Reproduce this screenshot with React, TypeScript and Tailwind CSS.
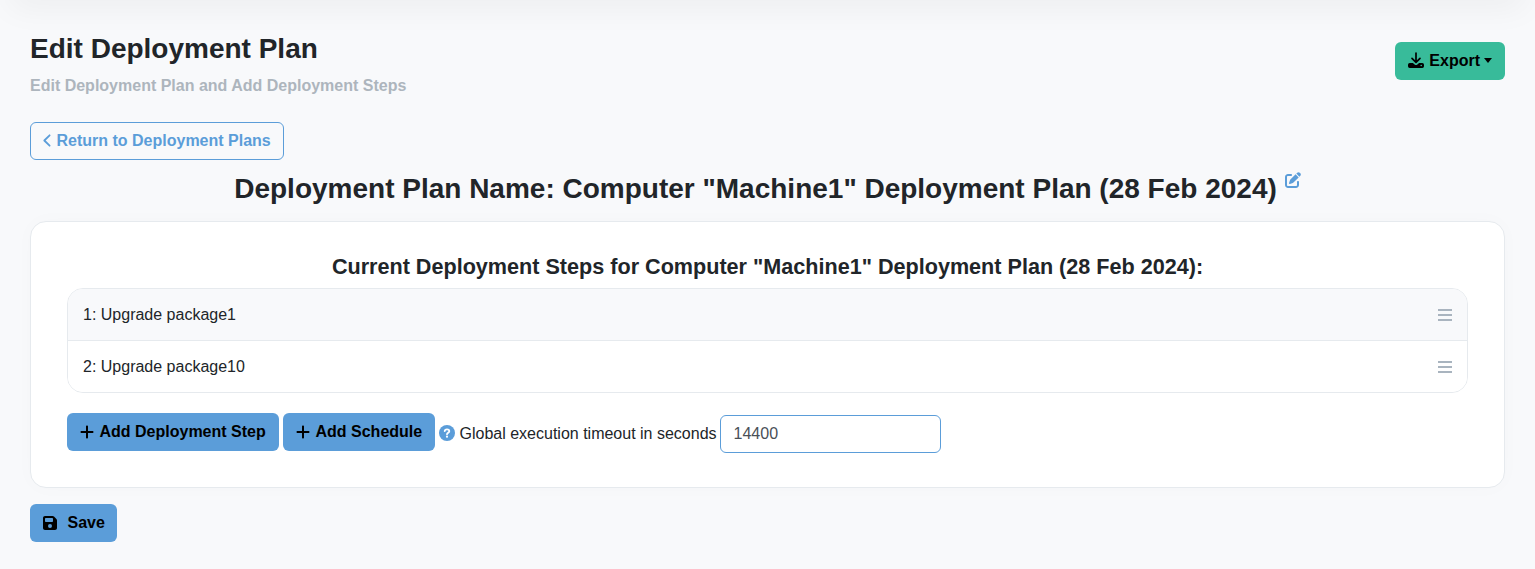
import type { ReactNode } from "react";
import { FaPlus, FaPenToSquare, FaFloppyDisk } from "react-icons/fa6";

function StepRow({ children, shaded }: { children: ReactNode; shaded?: boolean }) {
  return (
    <li className={`flex h-[52px] items-center justify-between border-b border-[#e6eaee] pr-[15px] pl-[15px] text-[#212529] last:h-[51px] last:border-b-0 ${shaded ? "bg-[#f8f9fb]" : "bg-white"}`}>
      <span className="text-base">{children}</span>
      <svg width="14" height="12" viewBox="0 0 14 12" fill="#a9b4bf" shapeRendering="crispEdges">
        <path d="M0 0h14v2H0zM0 5h14v2H0zM0 10h14v2H0z" />
      </svg>
    </li>
  );
}

function DownloadIcon() {
  return (
    <svg width="16" height="16" viewBox="0 0 16 16" className="mr-[5px] mb-[2px]">
      <path d="M8 1v9M4 6.3 8 10.3l4-4" fill="none" stroke="currentColor" strokeWidth="1.7" strokeLinecap="round" strokeLinejoin="round" />
      <path fillRule="evenodd" fill="currentColor" d="M1.7 11h3.2l1.7 1.5q1.4 1 2.8 0L11.1 11h3.2Q16 11 16 12.7v1.6q0 1.7-1.7 1.7H1.7Q0 16 0 14.3v-1.6Q0 11 1.7 11ZM13.2 12.7a.8.8 0 1 0 0 1.6.8.8 0 0 0 0-1.6Z" />
    </svg>
  );
}

function HelpIcon() {
  return (
    <svg width="16" height="16" viewBox="0 0 16 16" className="mr-[4.5px] mb-[2px]">
      <circle cx="8" cy="8" r="8" fill="#5b9dd9" />
      <path d="M5.7 6.1C5.8 4.9 6.6 4.4 8 4.4s2.3.7 2.3 1.8C10.3 7.6 8 7.7 8 9.2" fill="none" stroke="white" strokeWidth="1.8" strokeLinecap="round" />
      <circle cx="8" cy="11.7" r="1.1" fill="white" />
    </svg>
  );
}

export default function App() {
  return (
    <div className="h-[569px] overflow-hidden bg-[#f8f9fb] font-['Liberation_Sans',Arial,sans-serif] text-base text-[#212529]">
      <div className="mx-[10px] -mt-8 h-8 shadow-[0_8px_32px_rgba(0,0,0,0.05)]" />
      <div className="px-[30px] pt-8">
        <header className="flex justify-between">
          <div>
            <h1 className="text-[28px] leading-[34px] font-bold">Edit Deployment Plan</h1>
            <p className="mt-[8px] text-base leading-6 font-bold text-[#adb5bd]">Edit Deployment Plan and Add Deployment Steps</p>
          </div>
          <button className="mt-[10px] flex h-[38px] items-center rounded-[6px] bg-[#38bb9a] px-[13px] font-bold text-black">
            <DownloadIcon />
            Export
            <span className="mb-px ml-1 border-x-4 border-t-[5px] border-x-transparent border-t-black" />
          </button>
        </header>
        <button className="mt-6 flex h-[38px] w-[254px] items-center rounded-[6px] border border-[#5b9dd9] pl-3 font-bold whitespace-nowrap text-[#5b9dd9]">
          <svg width="10" height="16" viewBox="0 0 10 16" className="mr-[3.5px]" fill="none" stroke="currentColor" strokeWidth="1.8" strokeLinecap="round" strokeLinejoin="round">
            <path d="M6.6 2.3 1.3 7.5l5.3 5.2" />
          </svg>
          Return to Deployment Plans
        </button>
        <h2 className="mt-3 flex justify-center text-[28px] leading-[34px] font-bold">
          Deployment Plan Name: Computer "Machine1" Deployment Plan (28 Feb 2024)
          <FaPenToSquare className="ml-2 size-4 text-[#5b9dd9]" />
        </h2>
        <main className="mt-[15px] h-[267px] rounded-[16px] border border-[#e6eaee] bg-white px-9 pt-[31px] shadow-[0_0_20px_rgba(0,0,0,0.02)]">
          <h3 className="text-center text-[21.6px] leading-[27px] font-bold">Current Deployment Steps for Computer "Machine1" Deployment Plan (28 Feb 2024):</h3>
          <ul className="mt-2 overflow-hidden rounded-[16px] border border-[#e6eaee]">
            <StepRow shaded>1: Upgrade package1</StepRow>
            <StepRow>2: Upgrade package10</StepRow>
          </ul>
          <div className="mt-5 flex items-start">
            <button className="flex h-[38px] w-[212px] items-center rounded-[6px] bg-[#5b9dd9] pl-3 font-bold whitespace-nowrap text-black"><FaPlus className="mr-[4.5px] mb-px" />Add Deployment Step</button>
            <button className="ml-1 flex h-[38px] w-[152px] items-center rounded-[6px] bg-[#5b9dd9] pl-3 font-bold whitespace-nowrap text-black"><FaPlus className="mr-[4.5px] mb-px" />Add Schedule</button>
            <label className="mt-[2px] ml-1 flex h-[38px] items-center">
              <HelpIcon />
              Global execution timeout in seconds
              <input defaultValue="14400" className="ml-[3.5px] h-[38px] w-[221px] rounded-[6px] border border-[#5b9dd9] bg-white px-[12.5px] text-[#495057]" />
            </label>
          </div>
        </main>
        <button className="mt-4 flex h-[38px] w-[87px] items-center rounded-[6px] bg-[#5b9dd9] pl-3 font-bold text-black"><FaFloppyDisk className="mr-[9.5px] mb-px" />Save</button>
      </div>
    </div>
  );
}
